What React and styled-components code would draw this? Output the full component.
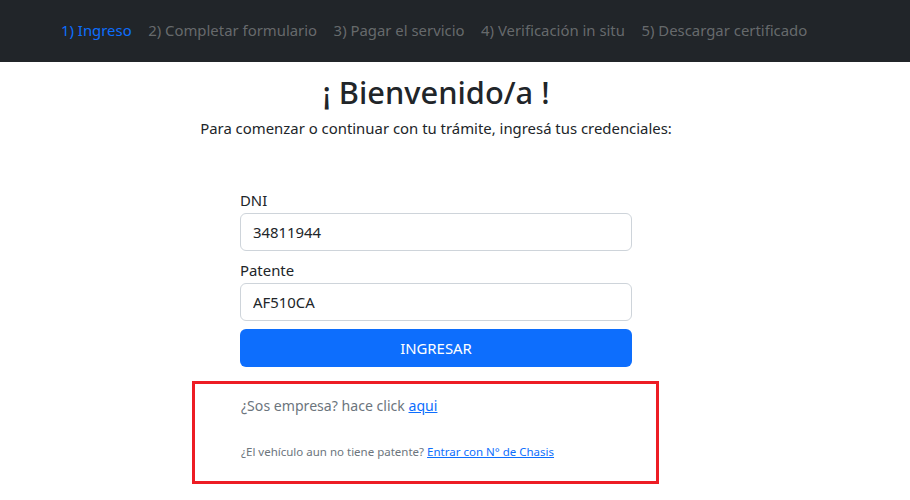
import React from "react";
import styled, { createGlobalStyle } from "styled-components";

const Global = createGlobalStyle`
  * { box-sizing: border-box; }
  body {
    margin: 0;
    background: #fff;
    font-family: "Noto Sans", "Open Sans", sans-serif;
    color: #212529;
  }
`;

const NavBar = styled.nav`
  height: 62px;
  background: #212529;
  display: flex;
  align-items: center;
  padding-left: 61px;
  padding-bottom: 2px;
  gap: 16.5px;
`;

const NavItem = styled.span`
  font-size: 14.9px;
  color: ${(p) => (p.$active ? "#0d6efd" : "rgba(255,255,255,0.33)")};
  white-space: nowrap;
`;

const Main = styled.main`
  display: flex;
  flex-direction: column;
  align-items: center;
  padding-right: 38px;
`;

const Title = styled.h2`
  margin: 12px 0 0;
  font-size: 30.8px;
  font-weight: 500;
  line-height: 1.2;
`;

const Lead = styled.p`
  margin: 6px 0 0;
  font-size: 14.9px;
  line-height: 1.5;
`;

const Form = styled.form`
  width: 392px;
  margin-top: 50px;
  display: flex;
  flex-direction: column;
`;

const Label = styled.label`
  font-size: 14.9px;
  line-height: 22px;
  margin-bottom: 2px;
`;

const Input = styled.input`
  height: 38px;
  border: 1px solid #ced4da;
  border-radius: 6px;
  padding: 0 12px;
  font-family: inherit;
  font-size: 14.9px;
  color: #212529;
  margin-bottom: 8px;
  outline: none;
`;

const Button = styled.button`
  height: 38px;
  border: 0;
  border-radius: 6px;
  background: #0d6efd;
  color: #fff;
  font-family: inherit;
  font-size: 14.9px;
  cursor: pointer;
`;

const Annotation = styled.div`
  align-self: flex-start;
  margin-left: 192px;
  margin-top: 14px;
  width: 467px;
  height: 103px;
  border: 3px solid #ed1c24;
  padding: 11px 0 0 46px;
  display: flex;
  flex-direction: column;
`;

const Note = styled.p`
  margin: 0;
  font-size: ${(p) => p.$size}px;
  color: #6c757d;
  margin-top: ${(p) => p.$mt || 0}px;
  line-height: 1.5;
`;

const Link = styled.a`
  color: #0d6efd;
  text-decoration: underline;
`;

export default function App() {
  return (
    <>
      <Global />
      <NavBar>
        <NavItem $active>1) Ingreso</NavItem>
        <NavItem>2) Completar formulario</NavItem>
        <NavItem>3) Pagar el servicio</NavItem>
        <NavItem>4) Verificación in situ</NavItem>
        <NavItem>5) Descargar certificado</NavItem>
      </NavBar>
      <Main>
        <Title>¡ Bienvenido/a !</Title>
        <Lead>Para comenzar o continuar con tu trámite, ingresá tus credenciales:</Lead>
        <Form onSubmit={(e) => e.preventDefault()}>
          <Label>DNI</Label>
          <Input defaultValue="34811944" />
          <Label>Patente</Label>
          <Input defaultValue="AF510CA" />
          <Button type="submit">INGRESAR</Button>
        </Form>
      </Main>
      <Annotation>
        <Note $size={14.1}>
          ¿Sos empresa? hace click <Link href="#">aqui</Link>
        </Note>
        <Note $size={11.5} $mt={27}>
          ¿El vehículo aun no tiene patente? <Link href="#">Entrar con N° de Chasis</Link>
        </Note>
      </Annotation>
    </>
  );
}
